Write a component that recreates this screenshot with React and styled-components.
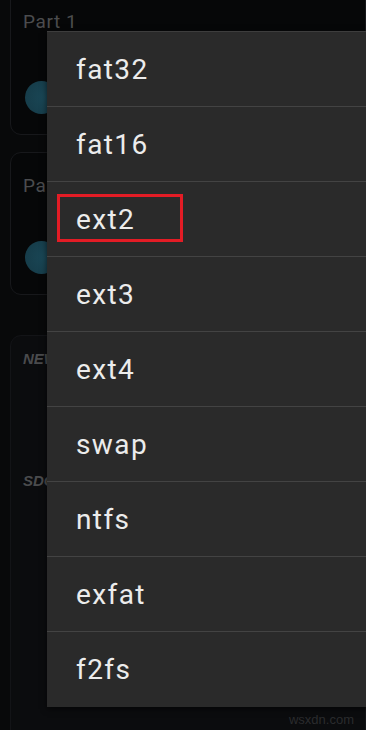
import styled, { createGlobalStyle } from 'styled-components';

const Global = createGlobalStyle`
  html, body { margin: 0; padding: 0; background: #08090a; }
  #root { width: 366px; height: 730px; }
`;

const items = ['fat32', 'fat16', 'ext2', 'ext3', 'ext4', 'swap', 'ntfs', 'exfat', 'f2fs'];

const App = () => {
    return (
        <Screen>
            <Global />
            <Backdrop>
                <Card $top={-12} $height={147}>
                    <CardTitle>Part 1</CardTitle>
                    <Dot $gap={48} />
                </Card>
                <Card $top={17} $height={143}>
                    <CardTitle>Part 2</CardTitle>
                    <Dot $gap={44} />
                </Card>
                <BigCard>
                    <Label>NEW</Label>
                    <Label $gap={105}>SDCARD</Label>
                </BigCard>
            </Backdrop>
            <Menu>
                {items.map((name, i) => (
                    <Item key={name} $last={i === items.length - 1}>
                        {name === 'ext2' && <Mark />}
                        <ItemText>{name}</ItemText>
                    </Item>
                ))}
            </Menu>
            <Watermark>wsxdn.com</Watermark>
        </Screen>
    );
};

const Screen = styled.div`
 position: relative;
 width: 366px;
 height: 730px;
 overflow: hidden;
 background: #08090a;
 font-family: Roboto, "Liberation Sans", sans-serif;
`;

const Backdrop = styled.div`
 display: flex;
 flex-direction: column;
 padding: 0 0 0 10px;
`;

const Card = styled.div`
 margin-top: ${p => p.$top}px;
 height: ${p => p.$height}px;
 box-sizing: border-box;
 border: 1px solid #17181b;
 border-radius: 11px;
 background: #060708;
 padding: 18px 12px 0;
 display: flex;
 flex-direction: column;
`;

const CardTitle = styled.div`
 color: #4b4c4e;
 font-size: 19px;
 letter-spacing: 0.6px;
 margin-top: 3px;
`;

const Dot = styled.div`
 width: 33px;
 height: 33px;
 border-radius: 50%;
 background: radial-gradient(circle at 60% 50%, #1a4756, #153a47);
 margin-top: ${p => p.$gap}px;
 margin-left: 2px;
`;

const BigCard = styled.div`
 margin-top: 40px;
 height: 420px;
 box-sizing: border-box;
 border: 1px solid #131417;
 border-radius: 11px;
 background: #0b0c0e;
 padding: 14px 12px 0;
 display: flex;
 flex-direction: column;
`;

const Label = styled.div`
 color: #4a4b4d;
 font-family: "Liberation Sans", Arial, sans-serif;
 font-style: italic;
 font-weight: bold;
 font-size: 15px;
 margin-top: ${p => p.$gap || 0}px;
`;

const Menu = styled.div`
 position: absolute;
 left: 47px;
 top: 31px;
 width: 330px;
 background: #2a2a2a;
 border-top: 1px solid #3d3d3d;
 box-shadow: 0 2px 6px rgba(0, 0, 0, 0.6);
 display: flex;
 flex-direction: column;
`;

const Item = styled.div`
 position: relative;
 height: 75px;
 box-sizing: border-box;
 display: flex;
 align-items: center;
 padding-left: 29px;
 border-bottom: ${p => (p.$last ? 'none' : '1px solid #434343')};
`;

const ItemText = styled.span`
 color: #ececec;
 font-size: 28px;
 letter-spacing: 1.4px;
`;

const Mark = styled.div`
 position: absolute;
 left: 10px;
 top: 12px;
 width: 126px;
 height: 48px;
 box-sizing: border-box;
 border: 3px solid #e31c25;
`;

const Watermark = styled.div`
 position: absolute;
 right: 12px;
 bottom: 3px;
 color: #2a2b2d;
 font-size: 13px;
 font-family: "Liberation Sans", Arial, sans-serif;
`;

export default App;
